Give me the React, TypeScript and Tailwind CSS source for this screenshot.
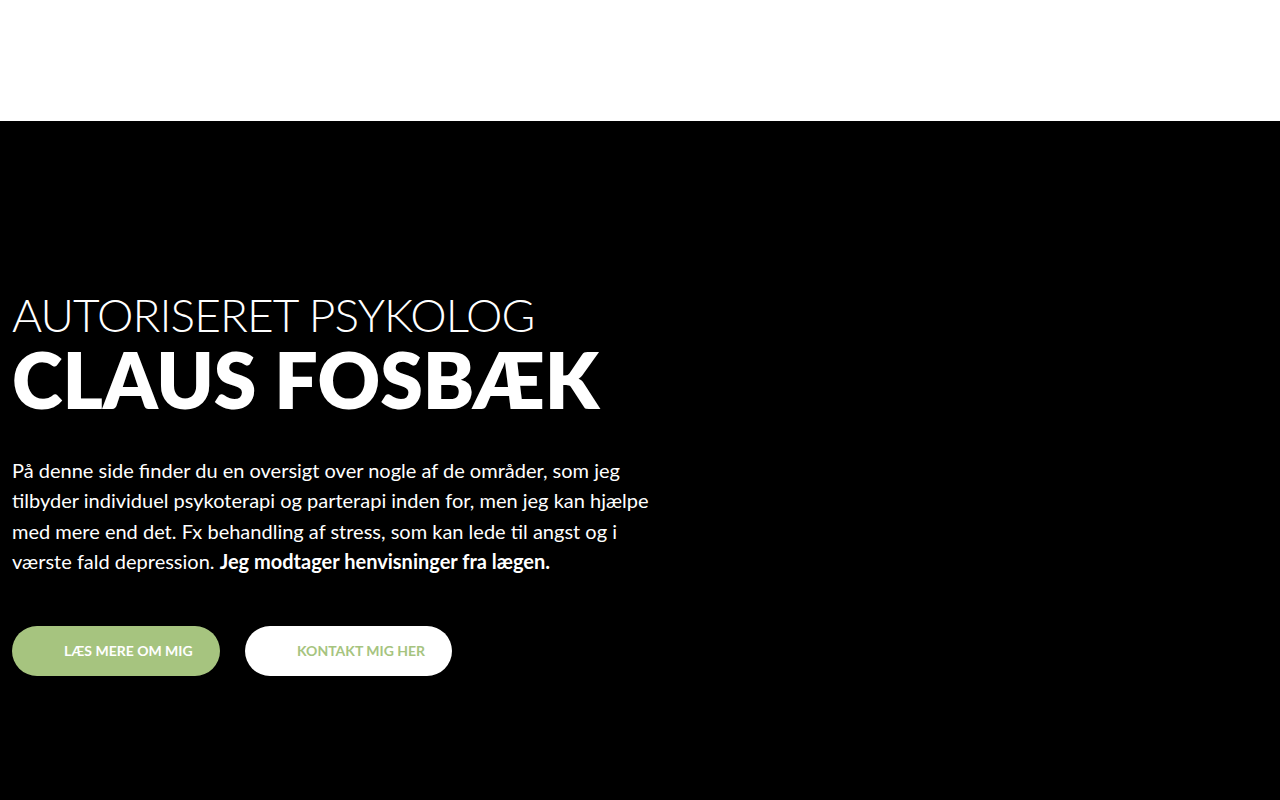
export default function App() {
  return (
    <div className="min-h-[800px] w-full bg-black font-['Lato','Open_Sans',sans-serif] text-white">
      <header className="h-[121px] bg-white" />
      <section className="px-3 pt-[166px] pb-[124px]">
        <h1 className="leading-none">
          <span className="block text-[46px] font-light leading-[56px] tracking-[-0.9px]">AUTORISERET PSYKOLOG</span>
          <span className="block text-[77px] font-extrabold leading-[72px]">CLAUS FOSBÆK</span>
        </h1>
        <p className="mt-[40px] w-[650px] text-[20px] leading-[30.4px]">
          På denne side finder du en oversigt over nogle af de områder, som jeg tilbyder individuel psykoterapi og
          parterapi inden for, men jeg kan hjælpe med mere end det. Fx behandling af stress, som kan lede til angst og
          i værste fald depression. <strong className="font-bold">Jeg modtager henvisninger fra lægen.</strong>
        </p>
        <div className="mt-[49px] flex gap-[25px]">
          <a
            href="#"
            className="flex h-[50px] w-[208px] items-center rounded-full bg-[#a6c47f] pl-[52px] text-[14px] font-bold text-white"
          >
            LÆS MERE OM MIG
          </a>
          <a
            href="#"
            className="flex h-[50px] w-[207px] items-center rounded-full bg-white pl-[52px] text-[14px] font-bold text-[#a6c47f]"
          >
            KONTAKT MIG HER
          </a>
        </div>
      </section>
    </div>
  )
}
